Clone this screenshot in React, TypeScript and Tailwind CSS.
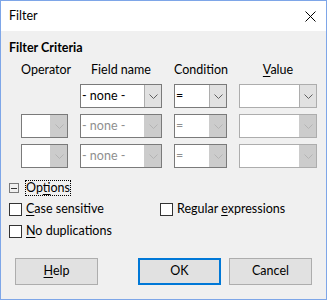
import React from "react";

const font = { fontFamily: 'Lato, "Noto Sans", "Liberation Sans", sans-serif' };

const Chevron = ({ disabled }: { disabled?: boolean }) => (
  <svg width="9" height="5" viewBox="0 0 9 5" className="block">
    <path
      d="M0.5 0.5 L4.5 4.5 L8.5 0.5"
      fill="none"
      stroke={disabled ? "#b4b4b4" : "#606060"}
      strokeWidth="1"
    />
  </svg>
);

const Combo = ({
  width,
  text,
  disabled,
  light,
}: {
  width: string;
  text?: string;
  disabled?: boolean;
  light?: boolean;
}) => (
  <div
    className={`${width} h-[24px] flex border ${
      light ? "border-[#adadad]" : "border-[#7a7a7a]"
    } bg-white`}
  >
    <div
      className={`flex-1 flex items-center pl-[1px] text-[12.5px] leading-none ${
        disabled ? "text-[#8f8f8f]" : "text-black"
      }`}
    >
      {text}
    </div>
    <div
      className={`w-[17px] flex items-center justify-center border-l ${
        disabled
          ? "bg-[#cccccc] border-[#cccccc]"
          : "bg-[#e1e1e1] border-[#adadad]"
      }`}
    >
      <Chevron disabled={disabled} />
    </div>
  </div>
);

const Check = ({ label, u }: { label: string; u: number }) => (
  <div className="flex items-center h-[16px] gap-[4px]">
    <div className="w-[13px] h-[13px] border border-[#333333] bg-white" />
    <span className="text-[12.5px] leading-[16px]">
      {label.slice(0, u)}
      <span className="underline underline-offset-2">{label[u]}</span>
      {label.slice(u + 1)}
    </span>
  </div>
);

const Btn = ({ children, focus }: { children: React.ReactNode; focus?: boolean }) => (
  <div
    className={`w-[83px] h-[27px] flex items-center justify-center text-[12.5px] bg-[#e1e1e1] ${
      focus ? "border-2 border-[#0078d7]" : "border border-[#adadad]"
    }`}
  >
    {children}
  </div>
);

export default function App() {
  return (
    <div
      style={font}
      className="w-[327px] h-[300px] border border-[#7ea6e8] flex flex-col bg-[#f0f0f0] text-black"
    >
      <div className="h-[30px] bg-white flex items-center justify-between pl-[8px] pr-[10px]">
        <span className="text-[12.5px]">Filter</span>
        <svg width="11" height="11" viewBox="0 0 11 11">
          <path d="M0.5 0.5 L10.5 10.5 M10.5 0.5 L0.5 10.5" stroke="#000" strokeWidth="1" />
        </svg>
      </div>
      <div className="flex-1 flex flex-col pl-[8px]">
        <div className="mt-[9px] text-[12.5px] font-bold leading-[16px]">Filter Criteria</div>
        <div className="ml-[12px] mt-[6px] grid grid-cols-[47px_82px_53px_78px] gap-x-[12px] gap-y-[6px]">
          <div className="text-center text-[12.5px] leading-[16px] mb-[-1px]">Operator</div>
          <div className="text-center text-[12.5px] leading-[16px]">Field name</div>
          <div className="text-center text-[12.5px] leading-[16px]">Condition</div>
          <div className="text-center text-[12.5px] leading-[16px]">
            <span className="underline underline-offset-2">V</span>alue
          </div>

          <div />
          <Combo width="w-[82px]" text="- none -" />
          <Combo width="w-[53px]" text="=" />
          <Combo width="w-[78px]" light />

          <Combo width="w-[47px]" disabled />
          <Combo width="w-[82px]" text="- none -" disabled />
          <Combo width="w-[53px]" text="=" disabled />
          <Combo width="w-[78px]" disabled light />

          <Combo width="w-[47px]" disabled />
          <Combo width="w-[82px]" text="- none -" disabled />
          <Combo width="w-[53px]" text="=" disabled />
          <Combo width="w-[78px]" disabled light />
        </div>

        <div className="mt-[12px] flex items-center h-[16px]">
          <div className="w-[10px] h-[10px] border border-[#7a7a7a] flex items-center justify-center">
            <div className="w-[6px] h-[1px] bg-[#333]" />
          </div>
          <span className="ml-[6px] text-[12.5px] leading-[14px] border border-dotted border-black">
            Op<span className="underline underline-offset-2">t</span>ions
          </span>
        </div>

        <div className="mt-[5px] flex">
          <div className="w-[151px]">
            <Check label="Case sensitive" u={0} />
          </div>
          <Check label="Regular expressions" u={8} />
        </div>
        <div className="mt-[6px]">
          <Check label="No duplications" u={0} />
        </div>

        <div className="mt-[19px] flex pl-[6px] pr-[14px]">
          <Btn>
            <span>
              <span className="underline underline-offset-2">H</span>elp
            </span>
          </Btn>
          <div className="ml-[40px]">
            <Btn focus>OK</Btn>
          </div>
          <div className="ml-[8px]">
            <Btn>Cancel</Btn>
          </div>
        </div>
      </div>
    </div>
  );
}
